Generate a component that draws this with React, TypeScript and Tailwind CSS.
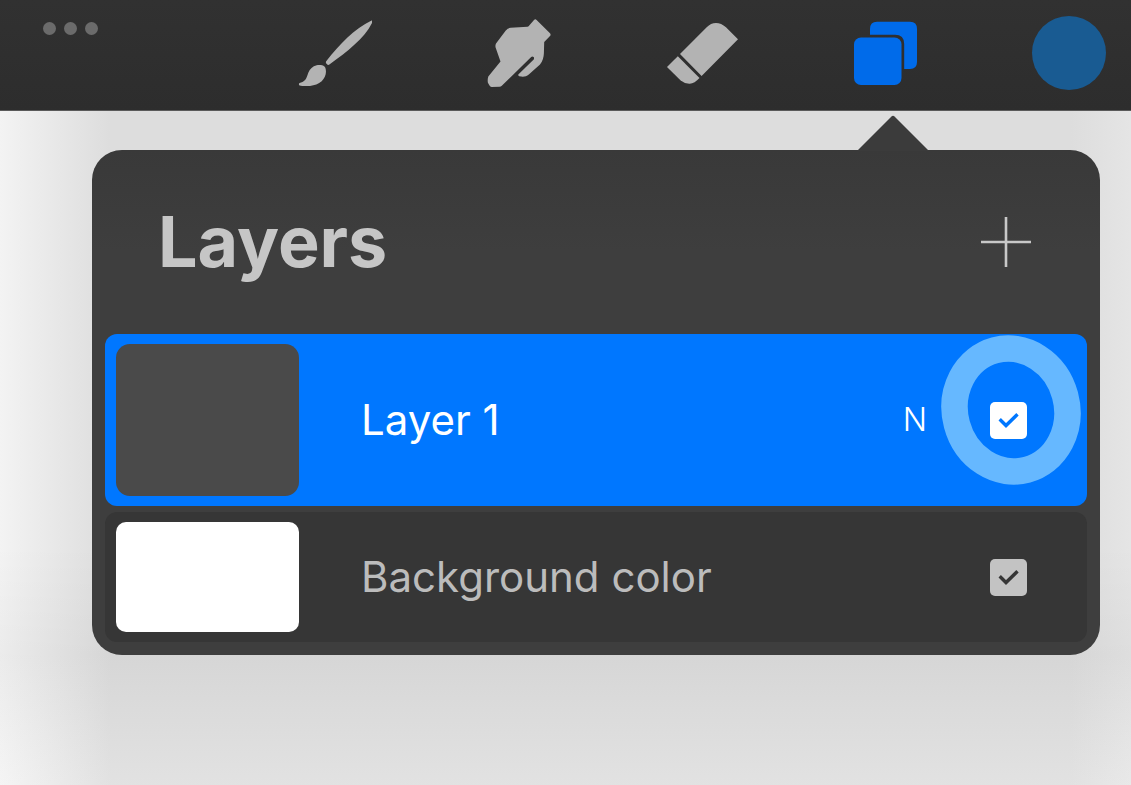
import React, { useState } from 'react';

interface Layer {
  id: string;
  name: string;
  blendMode?: string;
  visible: boolean;
}

const initialLayers: Layer[] = [
  { id: 'layer-1', name: 'Layer 1', blendMode: 'N', visible: true },
  { id: 'background', name: 'Background color', visible: true },
];

function BrushIcon() {
  return (
    <svg className="h-[66px] w-[74px]" viewBox="0 0 74 66" fill="currentColor">
      <path d="M73.6 0.6C56 9 42 24 28.2 41.3C27.7 42.2 27.8 43 28.3 43.6L29.6 44.8C30.2 45.2 30.8 45.1 31.4 44.6C50 31 67 18 74.5 2C74.8 1 74.4 0.4 73.6 0.6Z" />
      <path d="M26.7 46.7C24.5 45 21.5 44.9 18.7 45.3C14.5 46.4 12 49 10.3 52.7C9.3 55.2 8.8 58 7.3 59.8C5.5 61.8 3.5 62.5 1.6 63.1C0.6 63.6 0.7 65 1.6 65.5C4.5 66.3 8.5 66.3 12 65.9C16.5 65.3 20.5 64 23.7 61.2C26.7 58.2 28.3 54.5 27.9 50.7C27.8 49 27.5 47.5 26.7 46.7Z" />
    </svg>
  );
}

function SmudgeIcon() {
  return (
    <svg className="h-[68px] w-[65px]" viewBox="0 0 65 68" fill="currentColor">
      <path d="M47 0.9Q48.3 -0.2 49.6 0.9L63 14.3Q64.2 15.7 63 17L57.2 23L56.9 34.3C56.7 38.5 55.6 42.3 53 45.5L41.8 55.5C39 57.8 36 58 32.3 57.2Q31 56.8 31.3 55.5L46.7 40.5Q47.5 39 46.6 38Q45.3 37.3 44.2 37.9L14.8 66.7Q13.8 67.8 12.5 67.8L4.5 68Q3.2 67.9 2.5 66.5L0.9 63.7Q0.3 60.5 1.3 57.5L13.5 42.5L8.6 28.5Q8.1 26.5 9 24.5L18.8 11.5Q20.8 9 23.7 8.8L40.5 7.8Q41.3 7.7 42 6.8Z" />
    </svg>
  );
}

function EraserIcon() {
  return (
    <svg className="h-[62px] w-[71px]" viewBox="0 0 71 62" fill="currentColor">
      <path d="M13 32L39.7 5.2Q43.8 0.9 49 0.9Q54.2 0.9 59 5.2L71 17.3L34.6 54Z" />
      <path d="M10.8 34.2L0 45L13.7 58.5Q18 62 22.7 61.8Q27.5 61.4 32.5 56Z" />
    </svg>
  );
}

function LayersIcon() {
  return (
    <svg className="h-[64px] w-[64px]" viewBox="0 0 64 64" fill="currentColor">
      <path d="M17 14V8Q17 0.8 24 0.8H57Q64 0.8 64 8V41Q64 48 57 48H51.2V23Q51.2 13.7 42 13.7H17Z" />
      <rect x="1" y="16.5" width="47.5" height="47.5" rx="7" />
    </svg>
  );
}

interface VisibilityCheckboxProps {
  label: string;
  checked: boolean;
  selected: boolean;
  onChange: () => void;
}

function VisibilityCheckbox({ label, checked, selected, onChange }: VisibilityCheckboxProps) {
  return (
    <span className="grid shrink-0">
      <input
        type="checkbox"
        aria-label={`${label} visible`}
        checked={checked}
        onChange={onChange}
        className={`col-start-1 row-start-1 h-[37px] w-[37px] appearance-none rounded-[5px] ${
          selected ? 'bg-white' : 'bg-[#c3c3c3]'
        }`}
      />
      {checked && (
        <svg
          className={`pointer-events-none col-start-1 row-start-1 h-[37px] w-[37px] ${
            selected ? 'text-[#0077ff]' : 'text-[#363636]'
          }`}
          viewBox="0 0 37 37"
          fill="none"
          stroke="currentColor"
          strokeWidth={3.4}
        >
          <path d="M9.7 17.3L16 23.5L27.5 12.3" />
        </svg>
      )}
    </span>
  );
}

export default function App() {
  const [layers, setLayers] = useState(initialLayers);
  const selectedId = 'layer-1';

  const toggleLayer = (id: string) => {
    setLayers(layers.map((l) => (l.id === id ? { ...l, visible: !l.visible } : l)));
  };

  return (
    <div className="min-h-screen bg-[linear-gradient(to_bottom,transparent_calc(100%-240px),rgba(0,0,0,0.03)_calc(100%-130px),rgba(255,255,255,0.14)_100%),linear-gradient(to_right,#f3f3f3,#dddddd_110px,#dddddd_calc(100%-60px),#e5e5e5)] font-[Inter,sans-serif]">
      {/* Toolbar */}
      <header className="flex h-[111px] items-start justify-between border-b border-[#5a5a5a] bg-linear-to-b from-[#313131] to-[#2d2d2d] pr-[25px] pl-[43px]">
        <button type="button" aria-label="More" className="mt-[22px] flex gap-2">
          <span className="h-[13px] w-[13px] rounded-full bg-[#6b6b6b]" />
          <span className="h-[13px] w-[13px] rounded-full bg-[#6b6b6b]" />
          <span className="h-[13px] w-[13px] rounded-full bg-[#6b6b6b]" />
        </button>

        <nav className="flex h-[106px] items-center gap-[115px] text-[#b3b3b3]">
          <button type="button" aria-label="Paint">
            <BrushIcon />
          </button>
          <button type="button" aria-label="Smudge">
            <SmudgeIcon />
          </button>
          <button type="button" aria-label="Erase">
            <EraserIcon />
          </button>
          <button type="button" aria-label="Layers" className="text-[#006bea]">
            <LayersIcon />
          </button>
          <button
            type="button"
            aria-label="Color"
            className="h-[74px] w-[74px] rounded-full bg-[#195b92]"
          />
        </nav>
      </header>

      {/* Layers Panel */}
      <main className="pt-[39px] pr-[31px] pl-[92px]">
        <section className="relative rounded-[30px] bg-linear-to-b from-[#393939] to-[#3e3e3e] to-20% px-[13px] pb-[13px]">
          <svg
            className="absolute -top-[35px] right-[172px] h-[36px] w-[70px] text-[#3b3b3b]"
            viewBox="0 0 70 36"
            fill="currentColor"
          >
            <path d="M0 35L33.5 1.5Q35 0 36.5 1.5L70 35V36H0Z" />
          </svg>

          <div className="flex h-[184px] items-center justify-between pr-[56px] pl-[53px]">
            <h1 className="text-[70px] leading-none font-bold text-[#c6c6c6]">Layers</h1>
            <button type="button" aria-label="Add layer" className="text-[#c8c8c8]">
              <svg
                className="h-[50px] w-[50px]"
                viewBox="0 0 50 50"
                fill="none"
                stroke="currentColor"
                strokeWidth={2.6}
              >
                <path d="M25 0V50M0 25H50" />
              </svg>
            </button>
          </div>

          <ul className="flex flex-col gap-[6px]">
            {layers.map((layer) => {
              const selected = layer.id === selectedId;
              return (
                <li
                  key={layer.id}
                  className={`relative flex items-center rounded-xl py-[10px] pr-[60px] pl-[11px] ${
                    selected ? 'bg-[#0077ff] text-white' : 'bg-[#363636] text-[#bcbcbc]'
                  }`}
                >
                  <div
                    className={`w-[183px] shrink-0 ${
                      selected
                        ? 'h-[152px] rounded-[14px] bg-[#4a4a4a]'
                        : 'h-[110px] rounded-[10px] bg-white'
                    }`}
                  />
                  <span className="ml-[62px] flex-1 text-[42px] leading-none">{layer.name}</span>
                  {layer.blendMode && (
                    <button type="button" className="mr-[63px] text-[32px] leading-none font-light">
                      {layer.blendMode}
                    </button>
                  )}
                  <VisibilityCheckbox
                    label={layer.name}
                    checked={layer.visible}
                    selected={selected}
                    onChange={() => toggleLayer(layer.id)}
                  />
                  {/* Tap highlight around the checkbox */}
                  {selected && (
                    <svg
                      className="pointer-events-none absolute top-px right-[6px] h-[150px] w-[140px]"
                      viewBox="0 0 140 150"
                      fill="none"
                      stroke="#66b8ff"
                      strokeWidth={26.5}
                    >
                      <ellipse cx="70" cy="75" rx="56" ry="61.8" transform="rotate(-15 70 75)" />
                    </svg>
                  )}
                </li>
              );
            })}
          </ul>
        </section>
      </main>
    </div>
  );
}
